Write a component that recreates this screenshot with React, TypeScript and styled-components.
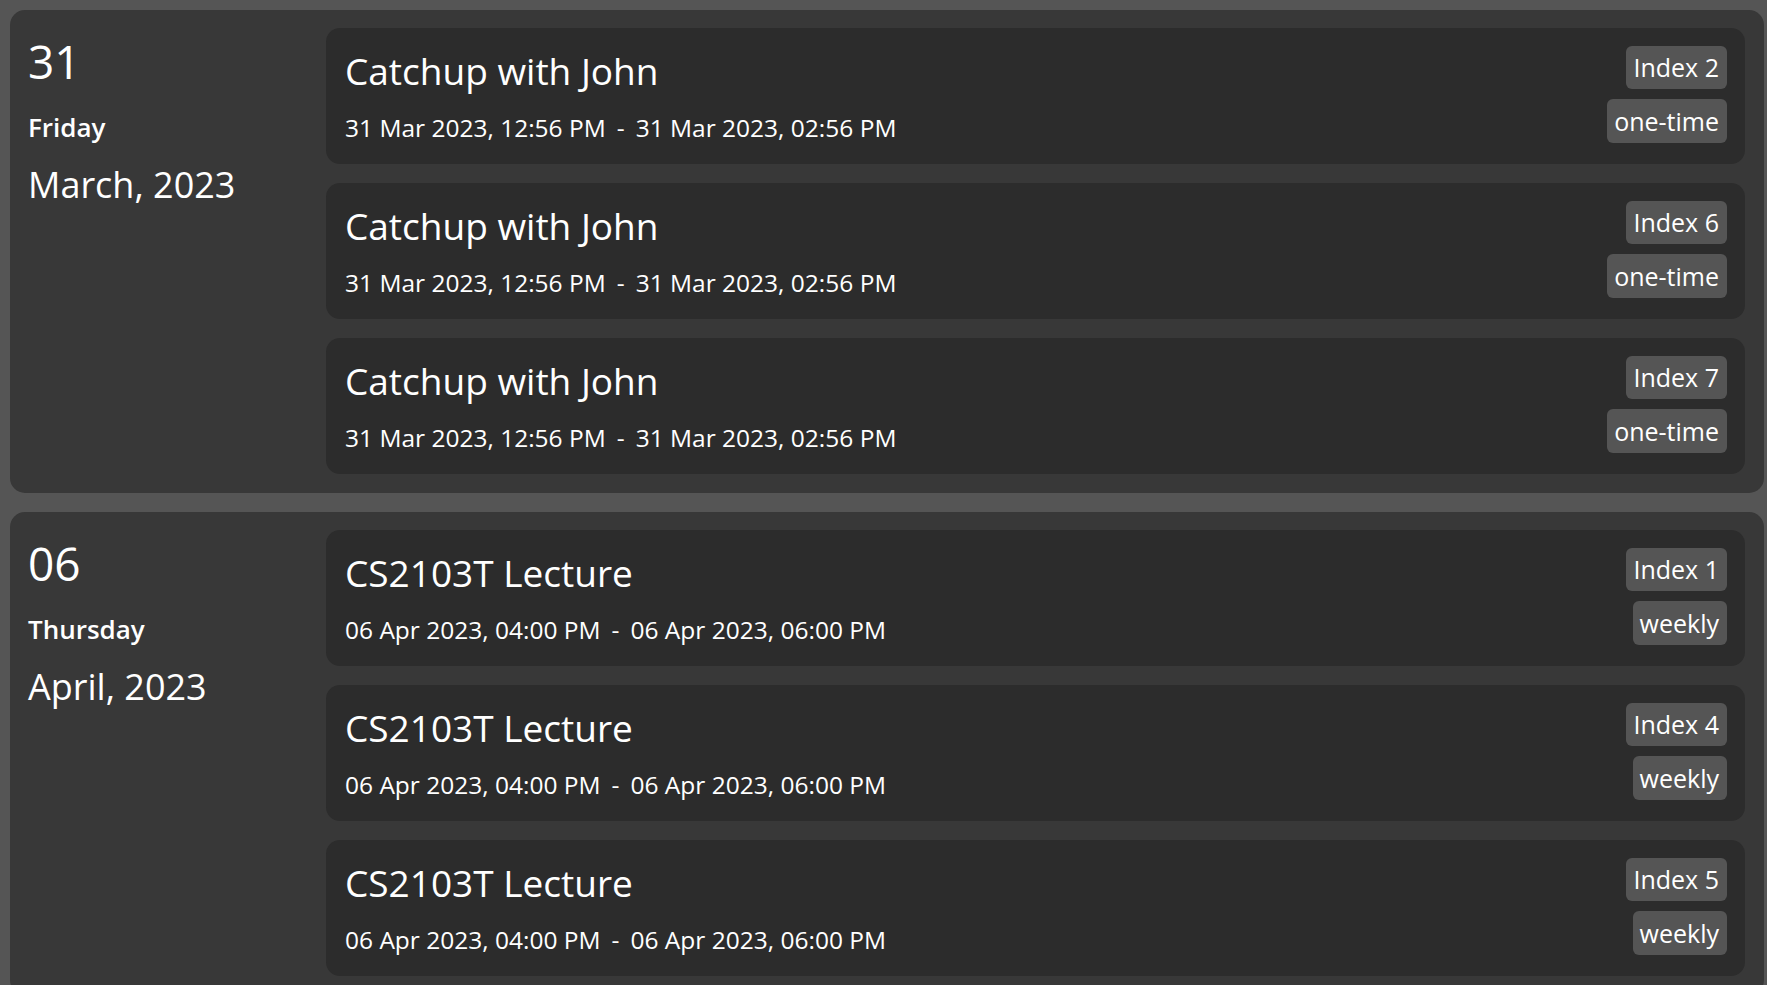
import React from "react";
import styled, { createGlobalStyle } from "styled-components";

const GlobalStyle = createGlobalStyle`
  html, body {
    margin: 0;
    padding: 0;
    overflow: hidden;
    background: #555555;
  }
  body {
    font-family: "Open Sans", "Noto Sans", sans-serif;
    font-weight: 500;
    color: #ffffff;
  }
`;

type EventItem = {
  title: string;
  start: string;
  end: string;
  index: number;
  recurrence: string;
};

type DayGroup = {
  day: string;
  weekday: string;
  month: string;
  events: EventItem[];
};

const groups: DayGroup[] = [
  {
    day: "31",
    weekday: "Friday",
    month: "March, 2023",
    events: [2, 6, 7].map((i) => ({
      title: "Catchup with John",
      start: "31 Mar 2023, 12:56 PM",
      end: "31 Mar 2023, 02:56 PM",
      index: i,
      recurrence: "one-time",
    })),
  },
  {
    day: "06",
    weekday: "Thursday",
    month: "April, 2023",
    events: [1, 4, 5].map((i) => ({
      title: "CS2103T Lecture",
      start: "06 Apr 2023, 04:00 PM",
      end: "06 Apr 2023, 06:00 PM",
      index: i,
      recurrence: "weekly",
    })),
  },
];

const Page = styled.div`
  display: flex;
  flex-direction: column;
  gap: 19px;
  padding: 10px 3px 0 10px;
  min-height: 985px;
  box-sizing: border-box;
`;

const Group = styled.section`
  display: grid;
  grid-template-columns: 298px 1fr;
  background: #383838;
  border-radius: 15px;
  padding: 18px 19px 19px 18px;
`;

const DateColumn = styled.div`
  display: flex;
  flex-direction: column;
  padding-top: 5px;
`;

const DayNumber = styled.div`
  font-size: 46px;
  line-height: 56px;
`;

const Weekday = styled.div`
  font-size: 26px;
  font-weight: 600;
  line-height: 36px;
  margin-top: 20px;
`;

const MonthYear = styled.div`
  font-size: 36px;
  line-height: 46px;
  margin-top: 17px;
`;

const EventList = styled.div`
  display: flex;
  flex-direction: column;
  gap: 19px;
`;

const Card = styled.article`
  display: flex;
  justify-content: space-between;
  align-items: flex-start;
  background: #2c2c2c;
  border-radius: 14px;
  padding: 18px 18px 21px 19px;
`;

const Info = styled.div`
  display: flex;
  flex-direction: column;
  gap: 19px;
  padding-top: 3px;
`;

const Title = styled.div`
  font-size: 37px;
  line-height: 44px;
`;

const TimeRow = styled.div`
  display: flex;
  align-items: center;
  gap: 11px;
  font-size: 24.5px;
  line-height: 31px;
`;

const Badges = styled.div`
  display: flex;
  flex-direction: column;
  align-items: flex-end;
  gap: 10px;
`;

const Badge = styled.span<{ $h: number }>`
  display: block;
  background: #555555;
  border-radius: 6px;
  font-size: 25px;
  height: ${(p) => p.$h}px;
  line-height: ${(p) => p.$h}px;
  padding: 0 8px 0 7px;
`;

export default function App() {
  return (
    <>
      <GlobalStyle />
      <Page>
        {groups.map((g) => (
          <Group key={g.day}>
            <DateColumn>
              <DayNumber>{g.day}</DayNumber>
              <Weekday>{g.weekday}</Weekday>
              <MonthYear>{g.month}</MonthYear>
            </DateColumn>
            <EventList>
              {g.events.map((e) => (
                <Card key={e.index}>
                  <Info>
                    <Title>{e.title}</Title>
                    <TimeRow>
                      <span>{e.start}</span>
                      <span>-</span>
                      <span>{e.end}</span>
                    </TimeRow>
                  </Info>
                  <Badges>
                    <Badge $h={43}>Index {e.index}</Badge>
                    <Badge $h={44}>{e.recurrence}</Badge>
                  </Badges>
                </Card>
              ))}
            </EventList>
          </Group>
        ))}
      </Page>
    </>
  );
}
